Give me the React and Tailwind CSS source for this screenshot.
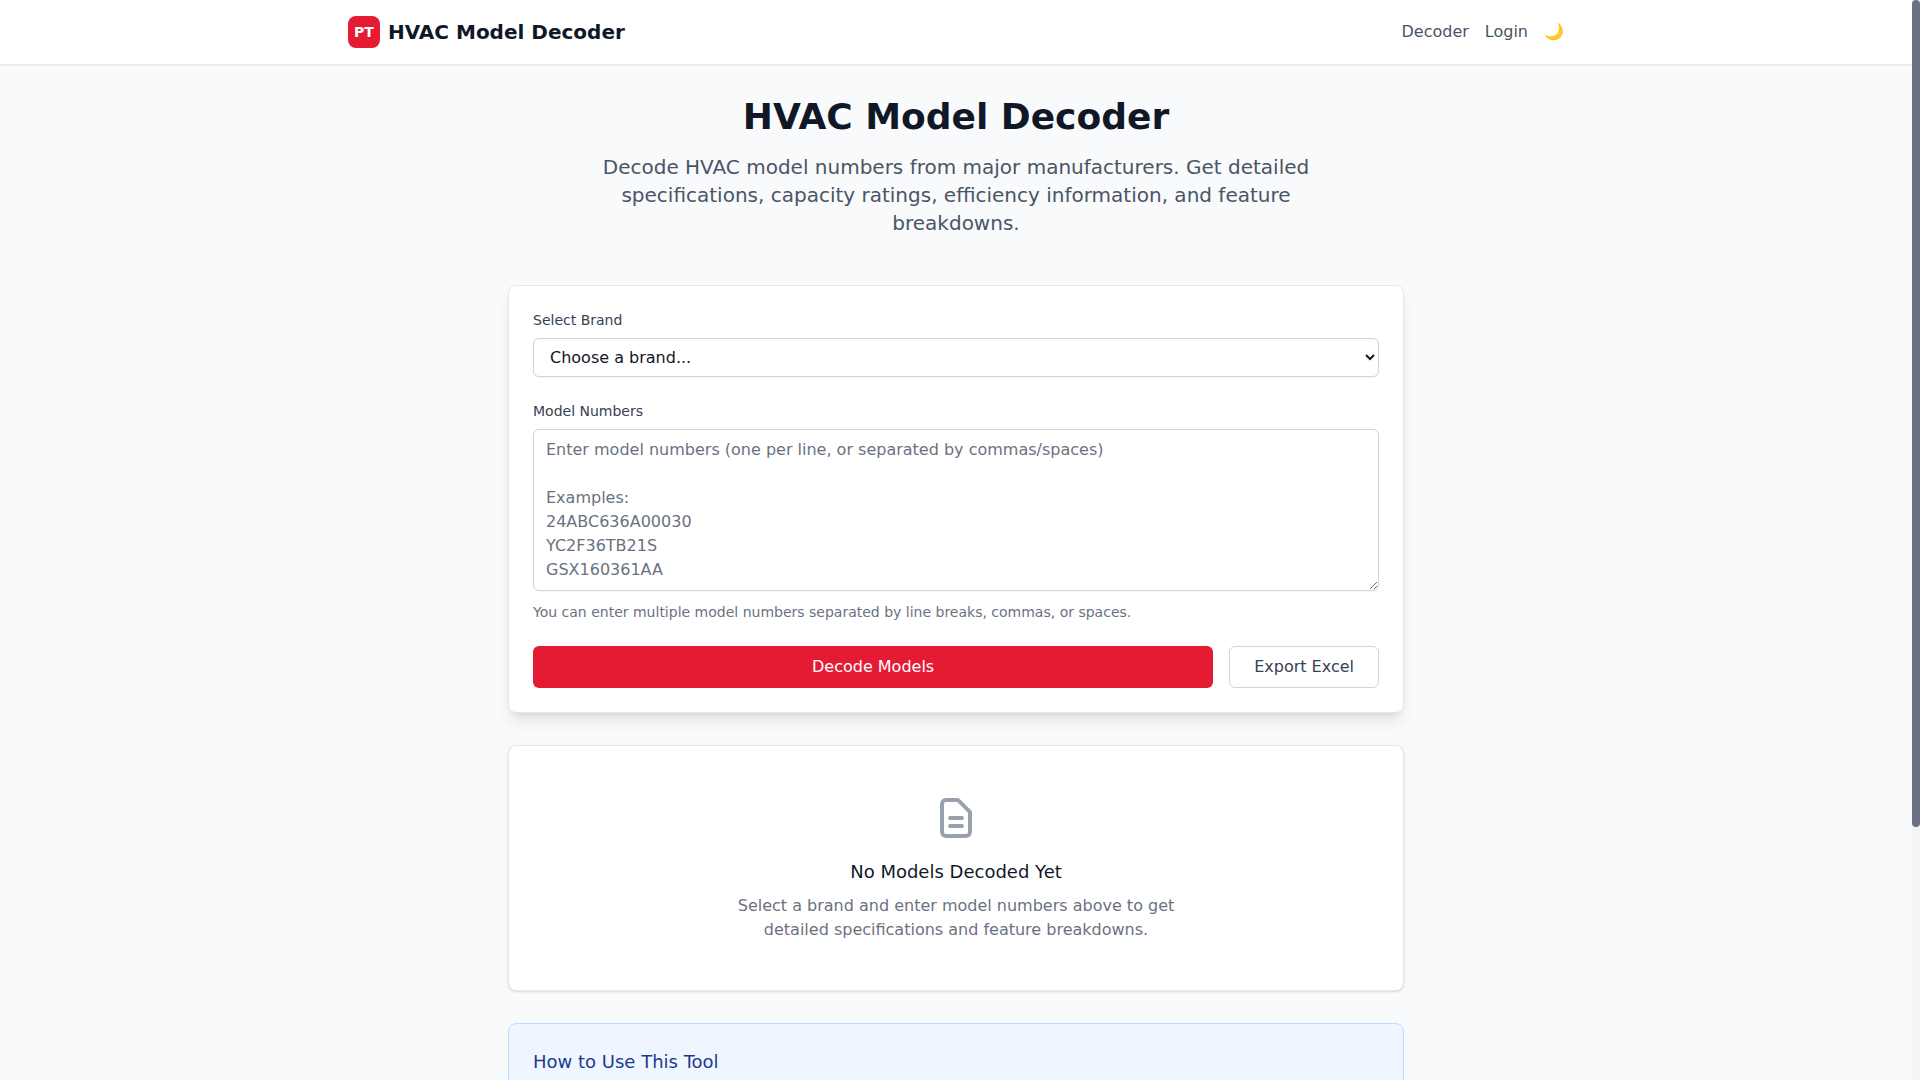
const brands = ["Carrier", "Trane", "Lennox", "Goodman", "York", "Rheem"];

const placeholder = `Enter model numbers (one per line, or separated by commas/spaces)

Examples:
24ABC636A00030
YC2F36TB21S
GSX160361AA`;

function Header() {
  return (
    <header className="border-b border-gray-200 bg-white shadow-xs">
      <div className="mx-auto flex h-16 max-w-7xl items-center justify-between px-8">
        <a href="#" className="flex items-center gap-2">
          <span className="flex size-8 items-center justify-center rounded-lg bg-[#e51b34] text-sm font-bold text-white">
            PT
          </span>
          <span className="text-xl font-bold text-gray-900">HVAC Model Decoder</span>
        </a>
        <nav className="flex items-center gap-4 text-gray-600">
          <a href="#decoder">Decoder</a>
          <a href="#login">Login</a>
          <button type="button" aria-label="Toggle dark mode">
            🌙
          </button>
        </nav>
      </div>
    </header>
  );
}

function DecoderForm() {
  return (
    <form className="space-y-6 rounded-lg border border-gray-200 bg-white p-6 shadow-lg">
      <div>
        <label htmlFor="brand" className="mb-2 block text-sm font-medium text-gray-700">
          Select Brand
        </label>
        <select
          id="brand"
          defaultValue=""
          className="block h-[39px] w-full rounded-md border border-gray-300 bg-white px-3 py-2 text-gray-900 shadow-xs"
        >
          <option value="">Choose a brand...</option>
          {brands.map((brand) => (
            <option key={brand} value={brand}>
              {brand}
            </option>
          ))}
        </select>
      </div>
      <div>
        <label htmlFor="models" className="mb-2 block text-sm font-medium text-gray-700">
          Model Numbers
        </label>
        <textarea
          id="models"
          rows={6}
          placeholder={placeholder}
          className="block w-full rounded-md border border-gray-300 bg-white px-3 py-2 text-gray-900 shadow-xs placeholder:text-gray-500"
        />
        <p className="mt-[11px] text-sm text-gray-500">
          You can enter multiple model numbers separated by line breaks, commas, or spaces.
        </p>
      </div>
      <div className="flex gap-4">
        <button type="button" className="flex-1 rounded-md bg-[#e51b34] px-6 py-2 font-medium text-white">
          Decode Models
        </button>
        <button
          type="button"
          className="rounded-md border border-gray-300 px-6 py-2 font-medium text-gray-700"
        >
          Export Excel
        </button>
      </div>
    </form>
  );
}

function EmptyResults() {
  return (
    <section className="mt-8 rounded-lg border border-gray-200 bg-white p-12 text-center shadow-sm">
      <svg
        className="mx-auto mb-4 size-12 text-gray-400"
        viewBox="0 0 24 24"
        fill="none"
        stroke="currentColor"
        strokeWidth={2}
        strokeLinecap="round"
        strokeLinejoin="round"
        aria-hidden="true"
      >
        <path d="M9 12h6m-6 4h6m2 5H7a2 2 0 01-2-2V5a2 2 0 012-2h5.586a1 1 0 01.707.293l5.414 5.414a1 1 0 01.293.707V19a2 2 0 01-2 2z" />
      </svg>
      <h3 className="mb-2 text-lg font-medium text-gray-900">No Models Decoded Yet</h3>
      <p className="mx-auto max-w-md text-gray-500">
        Select a brand and enter model numbers above to get detailed specifications and feature breakdowns.
      </p>
    </section>
  );
}

function ScrollRail() {
  return (
    <div className="w-2 shrink-0 bg-gray-100" aria-hidden="true">
      <div className="h-[76.6%] rounded bg-gray-500" />
    </div>
  );
}

export default function App() {
  return (
    <div className="flex h-screen font-['DejaVu_Sans',sans-serif]">
      <div className="min-w-0 flex-1 overflow-y-auto bg-gray-50 [scrollbar-width:none]">
        <Header />
        <main className="mx-auto max-w-4xl py-8">
          <div className="mb-12 text-center">
            <h1 className="mb-4 text-4xl font-bold text-gray-900">HVAC Model Decoder</h1>
            <p className="mx-auto max-w-3xl text-xl text-gray-600">
              Decode HVAC model numbers from major manufacturers. Get detailed specifications, capacity ratings,
              efficiency information, and feature breakdowns.
            </p>
          </div>
          <DecoderForm />
          <EmptyResults />
          <section className="mt-8 min-h-[355px] rounded-lg border border-blue-200 bg-blue-50 p-6">
            <h3 className="text-lg font-medium text-blue-900">How to Use This Tool</h3>
          </section>
        </main>
      </div>
      <ScrollRail />
    </div>
  );
}
